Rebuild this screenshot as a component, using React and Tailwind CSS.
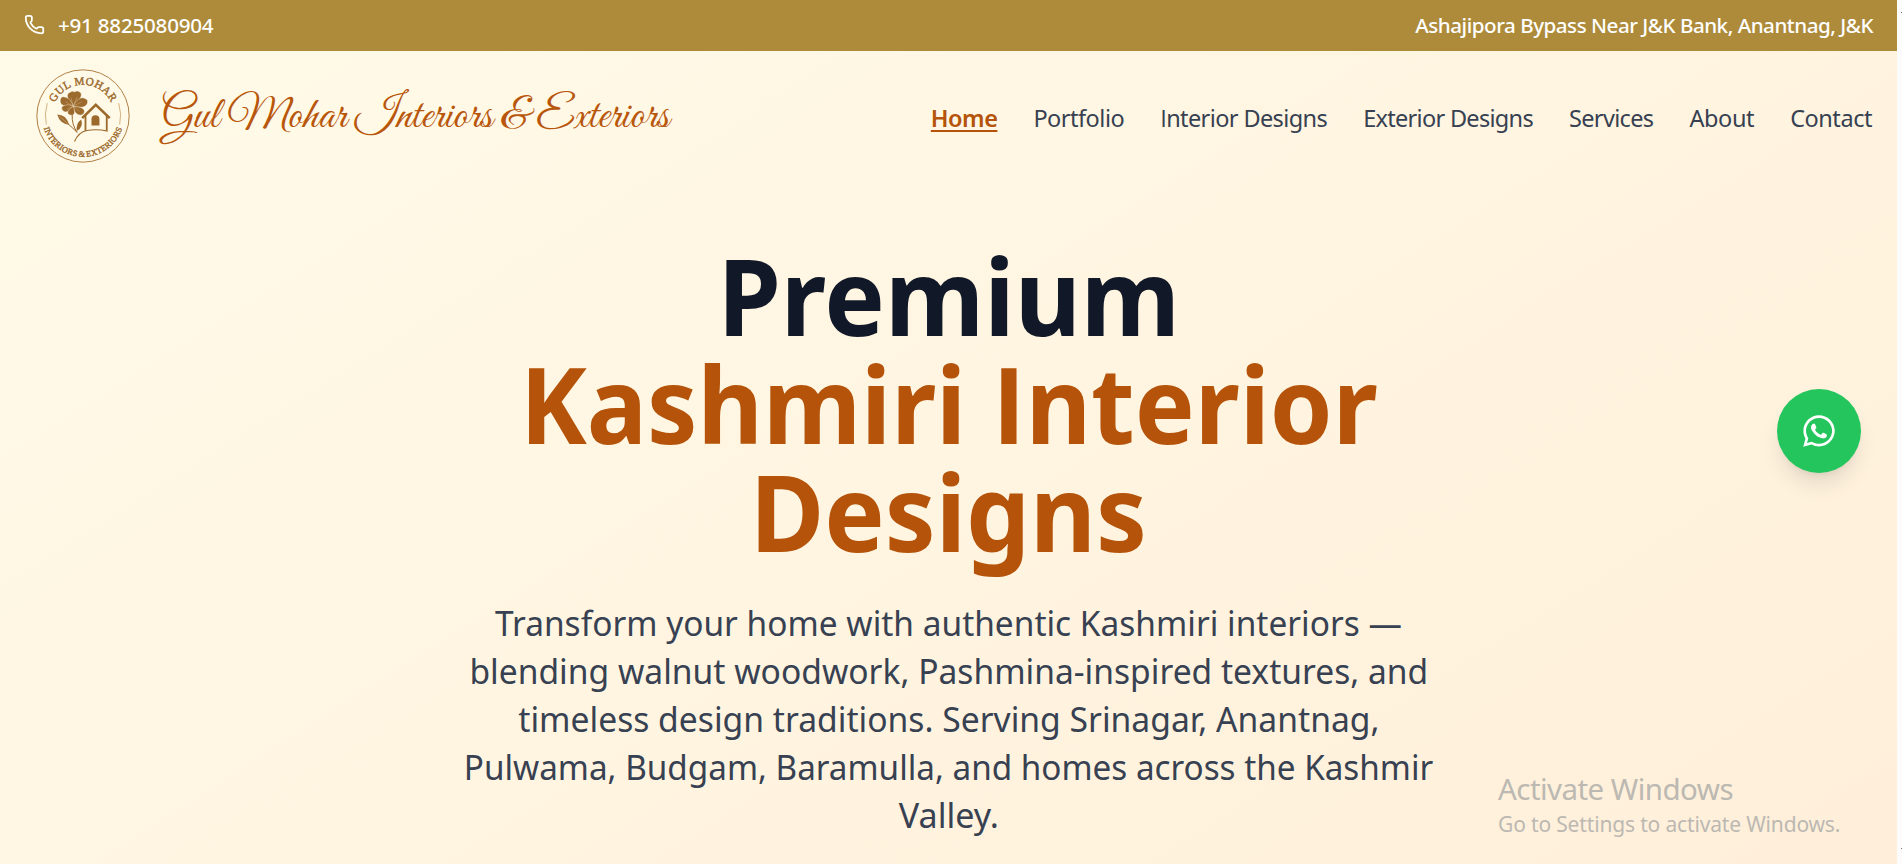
import { Phone } from "lucide-react";
import { FaWhatsapp } from "react-icons/fa";

const NAV = [
  { label: "Portfolio", tracking: "tracking-[-0.5px]" },
  { label: "Interior Designs", tracking: "tracking-[-0.6px]" },
  { label: "Exterior Designs", tracking: "tracking-[-0.7px]" },
  { label: "Services", tracking: "tracking-[-0.65px]" },
  { label: "About", tracking: "tracking-[-0.4px]" },
  { label: "Contact", tracking: "tracking-[-0.45px]" },
];

const INTRO = [
  { text: "Transform your home with authentic Kashmiri interiors —", scale: "scale-x-[0.9475]" },
  { text: "blending walnut woodwork, Pashmina-inspired textures, and", scale: "scale-x-[0.9515]" },
  { text: "timeless design traditions. Serving Srinagar, Anantnag,", scale: "scale-x-[0.953]" },
  { text: "Pulwama, Budgam, Baramulla, and homes across the Kashmir", scale: "scale-x-[0.942]" },
  { text: "Valley.", scale: "scale-x-[0.965]" },
];

// Sets a leading capital I without slab serifs.
function PlainI({ text }) {
  return text.startsWith("I") ? (
    <>
      <span className="[font-family:'Open_Sans',sans-serif]">I</span>
      {text.slice(1)}
    </>
  ) : (
    text
  );
}

function Logo() {
  return (
    <svg viewBox="19 26 283 283" className="size-[94px] shrink-0" fill="none" stroke="#9c6a2d">
      <defs>
        <path id="arc-top" d="M67 167 A93.5 93.5 0 0 1 254 167" />
        <path id="arc-bottom" d="M37 167 A123.5 123.5 0 0 0 284 167" />
      </defs>
      <circle cx="160.5" cy="167.5" r="139" strokeWidth="3" stroke="#b08046" />
      <g fill="#9c6a2d" fontFamily="'Liberation Serif', serif">
        <text fontSize="34" textAnchor="middle" letterSpacing="1" strokeWidth="1.3">
          <textPath href="#arc-top" startOffset="50%">GUL MOHAR</textPath>
        </text>
        <text fontSize="25" textAnchor="middle" letterSpacing="0.9" wordSpacing="-3" strokeWidth="1.2">
          <textPath href="#arc-bottom" startOffset="50%">INTERIORS &amp; EXTERIORS</textPath>
        </text>
      </g>
      <path d="M53 129 Q43 161 50 193 M268 129 Q278 161 271 193" stroke="#d3b27f" strokeWidth="3" />
      <g fill="#9c6a2d" stroke="#fff9e9" strokeWidth="1.2">
        <path d="M131 138 C112 118 108 100 122 96 Q129 90 134 95 Q148 88 155 100 C158 112 144 126 131 138Z" />
        <path d="M131 138 C108 140 90 136 92 120 Q94 106 108 111 C120 114 128 126 131 138Z" />
        <path d="M131 138 C140 118 156 108 166 115 Q178 118 173 131 C166 144 148 142 131 138Z" />
        <path d="M131 138 C122 156 104 160 98 149 Q92 140 104 136 C114 132 124 134 131 138Z" />
        <path d="M131 138 C154 140 170 146 163 159 Q156 169 145 163 C136 158 132 148 131 138Z" />
        <path d="M131 138 C138 154 136 166 125 165 Q112 164 115 154 C118 146 126 142 131 138Z" />
      </g>
      <path
        d="M131 138 L124 112 M131 138 L108 124 M131 138 L156 125 M131 138 L112 147 M131 138 L150 154 M131 138 L143 110"
        stroke="#d9bd90"
        strokeWidth="1.2"
      />
      <path d="M128 164 Q126 192 143 217 M143 217 Q128 202 112 188" strokeWidth="3" />
      <path d="M135 244 Q147 216 172 211 Q202 206 235 213" strokeWidth="3.5" />
      <g fill="#9c6a2d" stroke="none">
        <path d="M83 163 Q110 163 119 194 Q90 190 83 163Z" />
        <path d="M142 213 Q138 190 155 178 Q163 200 142 213Z" />
        <path d="M186 196 V177 A11 11 0 0 1 210 177 V196Z" />
      </g>
      <path d="M89 168 L114 190" stroke="#fff9e9" strokeWidth="1" />
      <path d="M168 166 V212 M232 166 V211" strokeWidth="5.5" />
      <path d="M158 174 L199 134 L241 174" strokeWidth="8" />
    </svg>
  );
}

export default function App() {
  return (
    <div className="flex h-[864px] w-full overflow-hidden bg-[#fcfcfc] [font-family:'Noto_Sans','Open_Sans',sans-serif]">
      <div className="relative flex h-[1200px] min-w-0 flex-1 flex-col bg-linear-to-br/srgb from-[#fffbe9] to-[#ffedd7]">
        <div className="flex h-[51px] shrink-0 items-center justify-between bg-[#ad8b3a] px-6 pb-px text-[20.6px] font-medium text-white">
          <div className="flex items-center gap-[13px]">
            <Phone className="size-[21px]" strokeWidth={2} />
            <span className="tracking-[-0.22px]">+91 8825080904</span>
          </div>
          <span className="tracking-[-0.48px]">Ashajipora Bypass Near J&amp;K Bank, Anantnag, J&amp;K</span>
        </div>

        <header className="flex h-[130px] shrink-0 items-center justify-between pl-9 pr-[25px]">
          <div className="flex items-center gap-[31.5px]">
            <Logo />
            <span className="whitespace-nowrap pt-[2px] text-[45px] leading-none tracking-[0.26px] text-[#b8560b] [font-family:'Great_Vibes',cursive]">
              Gul Mohar Interiors &amp; Exteriors
            </span>
          </div>
          <nav className="flex gap-9 pt-[3px] text-[23.5px] leading-9 text-[#374151]">
            <a className="font-semibold tracking-[-0.5px] text-[#b45309] underline decoration-2 underline-offset-[3px]">Home</a>
            {NAV.map((item) => (
              <a key={item.label} className={item.tracking}>
                <PlainI text={item.label} />
              </a>
            ))}
          </nav>
        </header>

        <main className="flex flex-col items-center pt-[60px]">
          <h1 className="flex flex-col items-center whitespace-nowrap text-[106px] font-bold leading-[108px] text-[#111827]">
            <span className="scale-x-[0.96]">Premium</span>
            <span className="scale-x-[0.949] text-[#b45309]">
              Kashmiri <PlainI text="Interior" />
            </span>
            <span className="scale-x-[0.957] text-[#b45309]">Designs</span>
          </h1>
          <p className="mt-[33px] flex flex-col items-center whitespace-nowrap text-[35.3px] leading-[48px] text-[#374151]">
            {INTRO.map((line) => (
              <span key={line.text} className={line.scale}>{line.text}</span>
            ))}
          </p>
        </main>

        <a className="absolute left-[1777px] top-[389px] flex size-[84px] items-center justify-center rounded-full bg-[#25c55e] text-white shadow-[0_15px_22px_-4px_rgba(0,0,0,0.1),0_6px_9px_-6px_rgba(0,0,0,0.1)]">
          <FaWhatsapp className="size-9" />
        </a>

        <div className="absolute left-[1498px] top-[770px] flex flex-col whitespace-nowrap text-[#bcb8b2]">
          <span className="text-[29.5px] leading-[38px] tracking-[-0.55px]">Activate Windows</span>
          <span className="text-[21px] leading-[32px] tracking-[-0.16px]">Go to Settings to activate Windows.</span>
        </div>
      </div>
      <div className="flex w-[5px] shrink-0 flex-col items-end justify-between pb-[15px] pt-3">
        <span className="h-px w-px bg-[#777]" />
        <span className="h-px w-px bg-[#777]" />
      </div>
    </div>
  );
}
